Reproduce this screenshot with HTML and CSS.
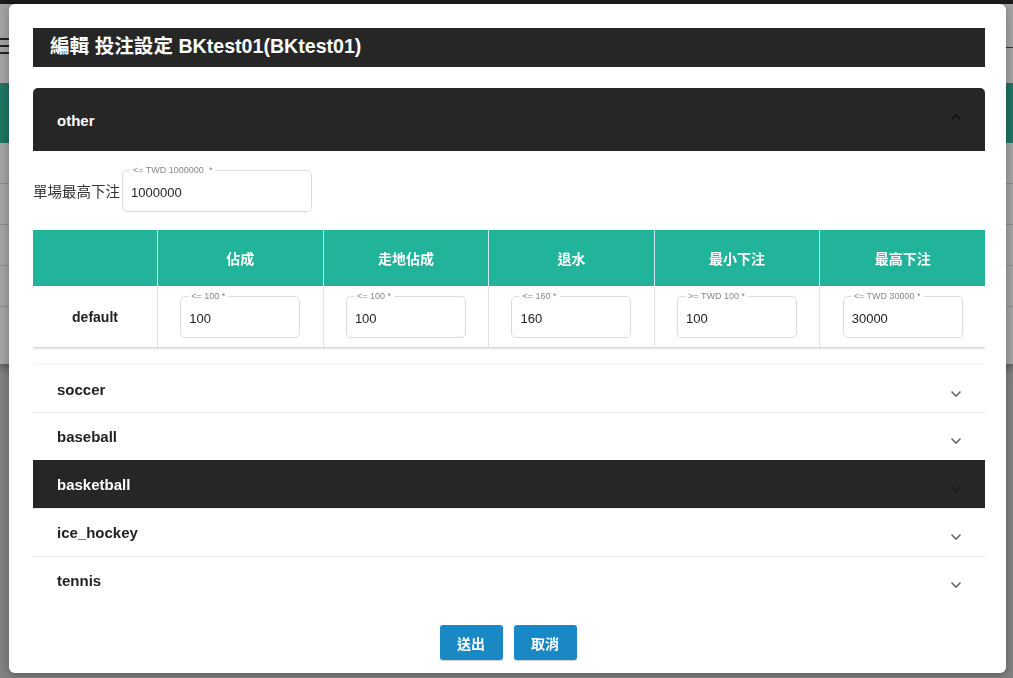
FILE: index.html
```html
<!DOCTYPE html>
<html lang="zh-Hant">
<head>
<meta charset="utf-8">
<title>編輯 投注設定</title>
<link rel="stylesheet" href="styles.css">
</head>
<body>
<div class="page">
  <div class="page-top"></div>
  <div class="page-main">
    <div class="page-head">
      <span class="menu-icon"><i></i><i></i><i></i></span>
      <span class="page-side"></span>
    </div>
    <div class="page-band"></div>
    <div class="page-row"></div>
    <div class="page-row"></div>
    <div class="page-row"></div>
    <div class="page-row"></div>
  </div>
</div>
<div class="backdrop"></div>

<div class="modal">
  <h1 class="modal-title">編輯 投注設定 BKtest01(BKtest01)</h1>

  <div class="modal-body">
    <section class="panel open">
      <header class="panel-head dark">
        <span>other</span>
        <svg class="chev up" width="12" height="8" viewBox="0 0 12 8"><path d="M1.5 6.5 L6 2 L10.5 6.5" fill="none" stroke="currentColor" stroke-width="1.6"/></svg>
      </header>
      <div class="panel-content">
        <div class="limit-row">
          <label class="limit-label">單場最高下注</label>
          <fieldset class="field wide">
            <legend>&lt;= TWD 1000000&nbsp;&nbsp;*</legend>
            <span class="value">1000000</span>
          </fieldset>
        </div>
        <div class="grid">
          <div class="gh"></div>
          <div class="gh">佔成</div>
          <div class="gh">走地佔成</div>
          <div class="gh">退水</div>
          <div class="gh">最小下注</div>
          <div class="gh">最高下注</div>

          <div class="gc name">default</div>
          <div class="gc"><fieldset class="field"><legend>&lt;= 100 *</legend><span class="value">100</span></fieldset></div>
          <div class="gc"><fieldset class="field"><legend>&lt;= 100 *</legend><span class="value">100</span></fieldset></div>
          <div class="gc"><fieldset class="field"><legend>&lt;= 160 *</legend><span class="value">160</span></fieldset></div>
          <div class="gc"><fieldset class="field"><legend>&gt;= TWD 100 *</legend><span class="value">100</span></fieldset></div>
          <div class="gc"><fieldset class="field"><legend>&lt;= TWD 30000 *</legend><span class="value">30000</span></fieldset></div>
        </div>
      </div>
    </section>

    <div class="sports">
      <div class="sport"><span>soccer</span><svg class="chev" width="12" height="8" viewBox="0 0 12 8"><path d="M1.5 1.5 L6 6 L10.5 1.5" fill="none" stroke="currentColor" stroke-width="1.6"/></svg></div>
      <div class="sport"><span>baseball</span><svg class="chev" width="12" height="8" viewBox="0 0 12 8"><path d="M1.5 1.5 L6 6 L10.5 1.5" fill="none" stroke="currentColor" stroke-width="1.6"/></svg></div>
      <div class="sport dark"><span>basketball</span><svg class="chev" width="12" height="8" viewBox="0 0 12 8"><path d="M1.5 1.5 L6 6 L10.5 1.5" fill="none" stroke="currentColor" stroke-width="1.6"/></svg></div>
      <div class="sport"><span>ice_hockey</span><svg class="chev" width="12" height="8" viewBox="0 0 12 8"><path d="M1.5 1.5 L6 6 L10.5 1.5" fill="none" stroke="currentColor" stroke-width="1.6"/></svg></div>
      <div class="sport"><span>tennis</span><svg class="chev" width="12" height="8" viewBox="0 0 12 8"><path d="M1.5 1.5 L6 6 L10.5 1.5" fill="none" stroke="currentColor" stroke-width="1.6"/></svg></div>
    </div>
  </div>

  <footer class="modal-foot">
    <button class="btn">送出</button>
    <button class="btn">取消</button>
  </footer>
</div>
</body>
</html>
```

FILE: styles.css
```css
* { box-sizing: border-box; }
html, body { margin: 0; padding: 0; }
body {
  width: 1013px;
  height: 678px;
  overflow: hidden;
  background: #c6c6c6;
  font-family: "Liberation Sans", "Noto Sans CJK TC", sans-serif;
  color: #222;
}

/* page behind the dialog */
.page-top { height: 4px; background: #292929; }
.page-main {
  background: #fbfbfb;
  height: 360px;
  box-shadow: 0 4px 8px rgba(0,0,0,0.35);
}
.page-head {
  height: 79px;
  display: flex;
  justify-content: space-between;
  align-items: center;
  padding-top: 4px;
}
.menu-icon {
  display: flex;
  flex-direction: column;
  gap: 5px;
  width: 16px;
  margin-left: -6px;
}
.menu-icon i { display: block; height: 2px; background: #333; }
.page-side {
  width: 8px;
  height: 14px;
  margin-top: -10px;
  border-bottom: 1px solid #555;
}
.page-band { height: 60px; background: #2fb298; }
.page-row { height: 41px; border-bottom: 1px solid #d6d6d6; }
.backdrop {
  position: fixed;
  inset: 0;
  background: rgba(0,0,0,0.35);
}

/* dialog */
.modal {
  position: fixed;
  top: 4px;
  left: 9px;
  width: 997px;
  height: 669px;
  background: #fff;
  border-radius: 6px;
  box-shadow: 0 2px 10px rgba(0,0,0,0.3);
  padding: 24px 21px 0 24px;
  display: flex;
  flex-direction: column;
}
.modal-title {
  margin: 0;
  height: 39px;
  background: #262626;
  color: #fff;
  font-size: 19.6px;
  font-weight: bold;
  line-height: 37px;
  padding-left: 17px;
  flex: none;
}
.modal-body {
  margin-top: 21px;
  height: 512px;
  flex: none;
  overflow: hidden;
  padding: 0 0 10px;
}

.panel {
  box-shadow: 0 1px 3px rgba(0,0,0,0.25);
  border-radius: 5px 5px 0 0;
}
.panel-head {
  height: 63px;
  display: flex;
  align-items: center;
  justify-content: space-between;
  padding: 2px 23px 0 24px;
  font-size: 15px;
  font-weight: bold;
}
.panel-head.dark { background: #262626; color: #fff; border-radius: 5px 5px 0 0; }
.chev { color: #6b6b6b; flex: none; }
.chev.up { color: #111; margin-top: -8px; }

.panel-content { background: #fff; }
.limit-row {
  display: flex;
  align-items: center;
  padding: 14px 0 18px;
}
.limit-label { font-size: 14.5px; color: #333; margin-right: 2px; padding-top: 4px; }

.field {
  margin: 0;
  border: 1px solid #dcdcdc;
  border-radius: 5px;
  padding: 0 8px;
  height: 47px;
  width: 120px;
  display: flex;
  align-items: center;
}
.field legend {
  font-size: 9px;
  color: #888;
  padding: 0 3px;
  margin-left: -1px;
  line-height: 10px;
}
.field.wide { width: 190px; }
.value { font-size: 13px; color: #222; margin-top: -1px; }

.grid {
  display: grid;
  grid-template-columns: 124px repeat(5, 1fr);
}
.gh {
  background: #22b39b;
  color: #fff;
  height: 56px;
  display: flex;
  align-items: center;
  justify-content: center;
  font-size: 14px;
  font-weight: bold;
  border-left: 1px solid #cfeee8;
}
.gh:first-child { border-left: none; }
.gc {
  height: 61px;
  display: flex;
  align-items: center;
  justify-content: center;
  border-left: 1px solid #e3e3e3;
  padding-bottom: 4px;
}
.gc.name { border-left: none; font-size: 14px; font-weight: bold; padding: 0; }

.sports {
  margin-top: 18px;
  box-shadow: 0 1px 3px rgba(0,0,0,0.25);
}
.sport {
  height: 48px;
  display: flex;
  align-items: center;
  justify-content: space-between;
  padding: 0 23px 0 24px;
  font-size: 15px;
  font-weight: bold;
  background: #fff;
  border-top: 1px solid #ececec;
}
.sport:first-child { border-top: none; height: 47px; padding-top: 2px; }
.sport .chev { margin-top: 8px; }
.sport.dark { background: #262626; color: #fff; border-top-color: #262626; }
.sport.dark .chev { color: #1a1a1a; }

.modal-foot {
  display: flex;
  justify-content: center;
  gap: 11px;
  padding-top: 25px;
  padding-right: 2px;
}
.btn {
  width: 63px;
  height: 35px;
  border: none;
  border-radius: 3px;
  background: #1b88c6;
  color: #fff;
  font-family: inherit;
  font-size: 14px;
  font-weight: bold;
  box-shadow: 0 1px 1px rgba(0,0,0,0.2);
}
```
